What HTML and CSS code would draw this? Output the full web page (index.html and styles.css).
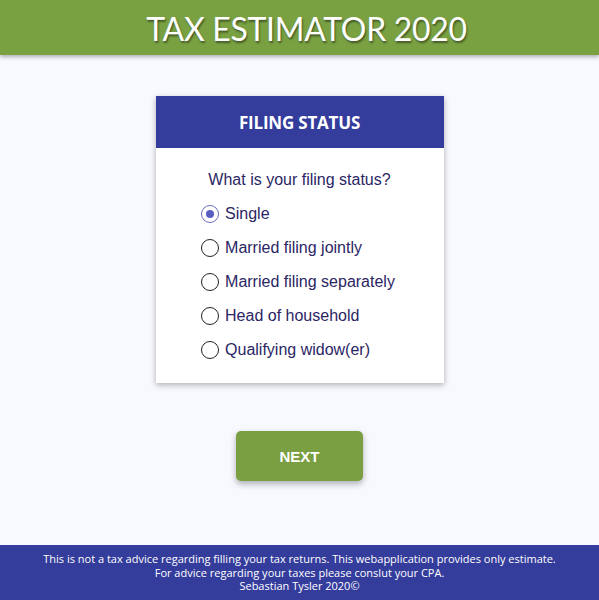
FILE: index.html
```html
<!DOCTYPE html>
<html>
<head>
<meta charset="utf-8">
<link rel="stylesheet" href="styles.css">
</head>
<body>
<header class="top">
  <h1 class="title">TAX ESTIMATOR 2020</h1>
</header>
<main class="main">
  <section class="card">
    <div class="card-head">FILING STATUS</div>
    <div class="card-body">
      <p class="question">What is your filing status?</p>
      <div class="options">
        <label class="opt"><span class="radio checked"></span>Single</label>
        <label class="opt"><span class="radio"></span>Married filing jointly</label>
        <label class="opt"><span class="radio"></span>Married filing separately</label>
        <label class="opt"><span class="radio"></span>Head of household</label>
        <label class="opt"><span class="radio"></span>Qualifying widow(er)</label>
      </div>
    </div>
  </section>
  <button class="next">NEXT</button>
</main>
<footer class="foot">
  <p>This is not a tax advice regarding filling your tax returns. This webapplication provides only estimate.</p>
  <p>For advice regarding your taxes please conslut your CPA.</p>
  <p>Sebastian Tysler 2020©</p>
</footer>
</body>
</html>
```
FILE: styles.css
```css
* { box-sizing: border-box; }
html, body { margin: 0; padding: 0; }
body {
  width: 599px;
  height: 600px;
  background: #f8f9fe;
  display: flex;
  flex-direction: column;
  font-family: "Liberation Sans", Arial, sans-serif;
  overflow: hidden;
}
.top {
  height: 55px;
  background: #79a142;
  box-shadow: 0 2px 4px rgba(0,0,0,0.3);
  display: flex;
  align-items: center;
  justify-content: center;
  padding-left: 14px;
}
.title {
  margin: 0;
  font-family: Lato, sans-serif;
  font-weight: 400;
  font-size: 32px;
  color: #fff;
  text-shadow: 1px 2px 2px rgba(0,0,0,0.45);
  letter-spacing: -0.3px;
  line-height: 1;
  padding-top: 2px;
}
.main {
  flex: 1;
  display: flex;
  flex-direction: column;
  align-items: center;
  padding-top: 41px;
}
.card {
  width: 288px;
  height: 287px;
  background: #fff;
  box-shadow: 0 2px 6px rgba(0,0,0,0.3);
}
.card-head {
  height: 52px;
  background: #343c9c;
  color: #fff;
  font-family: "Open Sans", sans-serif;
  font-weight: 700;
  font-size: 17px;
  letter-spacing: -0.2px;
  display: flex;
  align-items: center;
  justify-content: center;
}
.card-body {
  display: flex;
  flex-direction: column;
  align-items: center;
  padding-top: 22px;
}
.question {
  margin: 0 0 14px;
  font-size: 16px;
  line-height: 20px;
  color: #2b2664;
}
.options {
  display: flex;
  flex-direction: column;
  gap: 14px;
  margin-left: -3px;
}
.opt {
  display: flex;
  align-items: center;
  height: 20px;
  font-size: 16px;
  color: #2b2664;
}
.radio {
  width: 18px;
  height: 18px;
  border: 1.5px solid #222;
  border-radius: 50%;
  margin-right: 6px;
  display: flex;
  align-items: center;
  justify-content: center;
  background: #fff;
}
.radio.checked {
  border-color: #6b6fc6;
}
.radio.checked::after {
  content: "";
  width: 8px;
  height: 8px;
  border-radius: 50%;
  background: #5a5ec0;
}
.next {
  margin-top: 48px;
  width: 127px;
  height: 50px;
  border: none;
  border-radius: 5px;
  background: #7a9f42;
  color: #fff;
  font-family: "Liberation Sans", Arial, sans-serif;
  font-weight: 700;
  font-size: 15px;
  box-shadow: 0 3px 6px rgba(0,0,0,0.3);
}
.foot {
  height: 55px;
  background: #343c9c;
  color: #fff;
  font-family: "Open Sans", sans-serif;
  font-size: 11px;
  text-align: center;
  padding-top: 7px;
}
.foot p {
  margin: 0;
  line-height: 13.5px;
}
```
